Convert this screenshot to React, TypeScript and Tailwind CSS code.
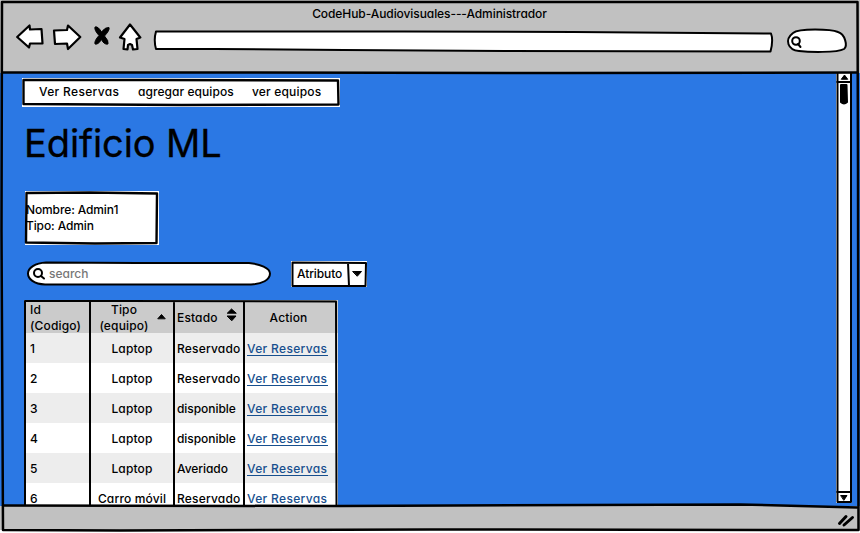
import type { ReactNode } from "react";

const rows = [
  ["1", "Laptop", "Reservado"],
  ["2", "Laptop", "Reservado"],
  ["3", "Laptop", "disponible"],
  ["4", "Laptop", "disponible"],
  ["5", "Laptop", "Averiado"],
  ["6", "Carro móvil", "Reservado"],
];

function Sketch({ w, h, children }: { w: number; h: number; children: ReactNode }) {
  return (
    <svg
      className="pointer-events-none absolute top-0 left-0 overflow-visible"
      width={w}
      height={h}
      viewBox={`0 0 ${w} ${h}`}
      fill="none"
      stroke="#000"
      strokeWidth="2"
      strokeLinejoin="round"
      strokeLinecap="round"
    >
      {children}
    </svg>
  );
}

function BrowserBar() {
  return (
    <header className="h-[73px] shrink-0 bg-[#c1c1c1]">
      <h1 className="h-[23px] pt-[6px] pr-px text-center leading-4 tracking-[-0.08px]">CodeHub-Audiovisuales---Administrador</h1>
      <div className="flex pl-4">
        <svg width="126" height="28" viewBox="16 23 126 28" fill="#fff" stroke="#000" strokeWidth="2.2" strokeLinejoin="round">
          <path d="M17.200 37 L29.500 25.500 L30 29.500 L41.500 29 L42.500 43.500 L30 43.500 L29 47.500 Z" />
          <path d="M54 30.500 L67 30 L68 25.500 L80.300 37 L68 49 L67 43.500 L55 44 Z" />
          <path fill="#000" strokeWidth="1" d="M95 27 Q98 26 101.500 32 Q105 27 109 27.500 Q110 30 104.500 36 Q109 41 108 44 Q104 45 101.500 39.500 Q98 45 95 44 Q94 41 99 35.500 Q94 30 95 27 Z" />
          <path d="M130 24.500 L140.300 37.500 L136.500 39 L137.500 49 L133 49.500 L132 45 L130 44 L128 45 L127.500 49.500 L123.500 49 L124.500 39 L120 37.500 Z" />
        </svg>
        <div className="relative ml-[12px] mt-[7px] h-[23px] w-[618px]">
          <Sketch w={618} h={23}>
            <path fill="#fff" d="M2 1.500 L250 1.500 L420 2 L617 3.500 Q619.500 10 616.500 21.500 L350 21 L190 20 L60 19 L2 19 Q-.5 10 2 1.500 Z" />
          </Sketch>
        </div>
        <div className="relative ml-[16px] mt-[6px] h-[24px] w-[60px]">
          <Sketch w={60} h={24}>
            <path fill="#fff" d="M5 4 C11 -1 43 0 50 3 C57 5 60 17 56 20 C49 24 20 23 11 22 C0 21 -4 11 5 4 Z" />
            <circle cx="8" cy="12" r="3.8" />
            <path d="M10 15 L12.500 18" />
          </Sketch>
        </div>
      </div>
    </header>
  );
}

function Menu() {
  return (
    <nav className="relative ml-[22px] flex h-[29px] w-[318px] items-center gap-[18px] bg-white pb-px pl-[17px]">
      <Sketch w={318} h={29}>
        <path strokeWidth="2.4" d="M1.500 2 L130 2 L316 2.500 L316.500 26.500 L160 27 L1.500 26 Z" />
      </Sketch>
      <span className="w-[81px] whitespace-nowrap tracking-[0.33px]">Ver Reservas</span>
      <span className="w-[96px] whitespace-nowrap tracking-[0.06px]">agregar equipos</span>
      <span className="whitespace-nowrap tracking-[0.17px]">ver equipos</span>
    </nav>
  );
}

function UserCard() {
  return (
    <section className="relative ml-[25px] mt-[23px] h-[54px] w-[134px] bg-white pt-[11px] pl-[1px] leading-4 tracking-[-0.12px]">
      <p>Nombre: Admin1</p>
      <p>Tipo: Admin</p>
      <Sketch w={134} h={54}>
        <path d="M1.500 2 L65 1.500 L132 2.500 L131.500 52 L70 52.500 L1 51.500 Z" strokeWidth="2.4" />
      </Sketch>
    </section>
  );
}

function Filters() {
  return (
    <div className="mt-[16px] ml-[27px] flex">
      <div className="relative h-[26px] w-[245px]">
        <Sketch w={245} h={26}>
          <path fill="#fff" d="M19 1.500 L110 2 L222 2 C233 3 243 7 243 12.500 C243 19 235 23 224 23.500 L18 23.500 C7 23 1 18 1 12.500 C1 7 8 2 19 1.500 Z" />
          <circle cx="11" cy="12" r="4" />
          <path d="M14 15 L17 17.500" />
        </Sketch>
        <span className="relative block pt-[3px] pl-[22px] text-[#777]">search</span>
      </div>
      <div className="relative ml-[19px] h-[26px] w-[76px] bg-white pt-[3px] pl-[6px]">
        <Sketch w={76} h={26}>
          <path d="M1.500 1.500 L75 2 L74.500 25 L1.500 25 Z M57 2 L58 25" />
          <path fill="#000" strokeWidth="1" d="M62 10.500 H70.500 L66.500 15 Z" />
        </Sketch>
        <span className="tracking-[-0.1px]">Atributo</span>
      </div>
    </div>
  );
}

function EquipmentTable() {
  return (
    <div className="relative mt-[13px] ml-[24px] w-[314px] bg-white">
      <div className="grid h-[33px] grid-cols-[66px_84px_70px_94px] items-center bg-[#cbcbcb] leading-4 tracking-[0.15px]">
        <span className="pt-[2px] pl-[6px]">Id<br />(Codigo)</span>
        <span className="pt-[2px] pr-[16px] text-center">Tipo<br />(equipo)</span>
        <span className="pt-[2px] pl-[3px]">Estado</span>
        <span className="pt-[2px] pr-[5px] text-center">Action</span>
      </div>
      {rows.map(([id, type, state], i) => (
        <div key={id} className={`grid h-[30px] grid-cols-[66px_84px_70px_94px] items-center ${i % 2 ? "bg-white" : "bg-[#ededed]"}`}>
          <span className="pt-px pl-[6px]">{id}</span>
          <span className="pt-px text-center tracking-[0.15px] whitespace-nowrap">{type}</span>
          <span className={`pt-px pl-[3px] whitespace-nowrap ${state === "Reservado" ? "tracking-[0.2px]" : "tracking-[-0.05px]"}`}>{state}</span>
          <a className="ml-[3px] flex h-[15px] w-[81px] items-center border-b border-[#174f8e] pt-[2px] whitespace-nowrap tracking-[0.33px] text-[#174f8e]">Ver Reservas</a>
        </div>
      ))}
      <Sketch w={314} h={207}>
        <path d="M1 207 L1 1 L100 1 L312 1.500 L312.500 207 M66 2 V207 M150 2 V207 M220 2 V207" />
        <path fill="#000" strokeWidth="1" d="M134 18.500 L137.500 14.500 L141 18.500 Z M203.500 13 L207.500 9 L212 13 Z M203.500 16 L212 16 L208 20.500 Z" />
      </Sketch>
    </div>
  );
}

function Scrollbar() {
  return (
    <aside className="relative mr-[8px] h-[430px] w-[16px] bg-white">
      <Sketch w={16} h={430}>
        <path d="M1.500 0 V429 H15 L15 0 M1 9 H15 M1 419 H15" />
        <path fill="#000" strokeWidth="1" d="M5.500 6 L8.500 2 L11.500 6 Z M5 422.500 H11 L8 427 Z" />
        <path fill="#000" d="M5 12 L10.500 12 L11 29 Q8 32 5 29 Z" />
      </Sketch>
    </aside>
  );
}

export default function App() {
  return (
    <div className="relative flex h-[533px] w-[860px] flex-col overflow-hidden bg-white font-['Inter','Noto_Sans',sans-serif] text-[12px] leading-5 font-medium text-black [font-feature-settings:'cv11']">
      <BrowserBar />
      <div className="flex h-[433px] shrink-0 justify-between overflow-hidden bg-[#2b78e4]">
        <main className="pt-[5px]">
          <Menu />
          <h2 className="mt-[12px] ml-[24px] h-[49px] text-[38px] leading-[49px] font-normal tracking-[-0.1px] [-webkit-text-stroke:0.3px_black]">Edificio ML</h2>
          <UserCard />
          <Filters />
          <EquipmentTable />
        </main>
        <Scrollbar />
      </div>
      <footer className="h-[24px] shrink-0 bg-[#c1c1c1]" />
      <Sketch w={860} h={533}>
        <path d="M2 2 L430 2 L857.500 2 L858 170 L858.500 530 L430 529.500 L120 530.500 L3 530 L1.500 230 Z" strokeWidth="2.5" />
        <path d="M3 72.500 L230 72.500 L560 73 L857 72.500 M3 505.500 L340 506 L740 504.500 L857 507.500" strokeWidth="2.5" />
        <path d="M839.500 523.500 L846 516.500 M844 525 L852.500 517.500" strokeWidth="3" />
      </Sketch>
    </div>
  );
}
